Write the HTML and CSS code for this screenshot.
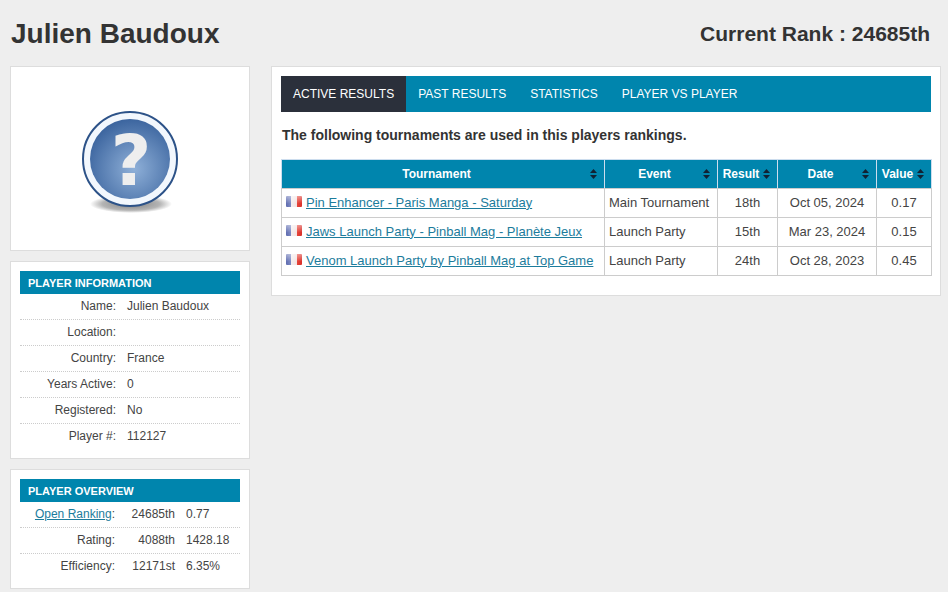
FILE: index.html
```html
<!DOCTYPE html>
<html lang="en">
<head>
    <meta charset="UTF-8">
    <title>Julien Baudoux</title>
    <link rel="stylesheet" href="styles.css">
</head>
<body>
    <div class="page-head">
        <h1>Julien Baudoux</h1>
        <h2>Current Rank : 24685th</h2>
    </div>
    <div class="layout">
        <div class="sidebar">
            <div class="card photo">
                <svg width="110" height="116" viewBox="0 0 110 116">
                    <defs>
                        <radialGradient id="ball" cx="0.55" cy="0.62" r="0.62">
                            <stop offset="0" stop-color="#8fb0d8"/>
                            <stop offset="1" stop-color="#3c659f"/>
                        </radialGradient>
                        <radialGradient id="shade">
                            <stop offset="0" stop-color="#808080"/>
                            <stop offset="0.7" stop-color="#b4b4b4"/>
                            <stop offset="1" stop-color="#fff"/>
                        </radialGradient>
                    </defs>
                    <ellipse cx="56" cy="95" rx="41" ry="9" fill="url(#shade)"/>
                    <circle cx="55" cy="50" r="47" fill="#f2f7fd" stroke="#2c5288" stroke-width="2"/>
                    <circle cx="55" cy="50" r="40" fill="url(#ball)"/>
                    <text class="mark" x="56" y="76" text-anchor="middle">?</text>
                </svg>
            </div>
            <div class="card">
                <div class="bar">Player Information</div>
                <div class="row"><span class="lbl">Name:</span><span>Julien Baudoux</span></div>
                <div class="row"><span class="lbl">Location:</span><span></span></div>
                <div class="row"><span class="lbl">Country:</span><span>France</span></div>
                <div class="row"><span class="lbl">Years Active:</span><span>0</span></div>
                <div class="row"><span class="lbl">Registered:</span><span>No</span></div>
                <div class="row"><span class="lbl">Player #:</span><span>112127</span></div>
            </div>
            <div class="card">
                <div class="bar">Player Overview</div>
                <div class="row row3"><span class="lbl"><a href="#">Open Ranking</a>:</span><span class="num">24685th</span><span>0.77</span></div>
                <div class="row row3"><span class="lbl">Rating:</span><span class="num">4088th</span><span>1428.18</span></div>
                <div class="row row3"><span class="lbl">Efficiency:</span><span class="num">12171st</span><span>6.35%</span></div>
            </div>
        </div>
        <div class="card main">
            <ul class="tabs">
                <li class="active"><a href="#">Active Results</a></li>
                <li><a href="#">Past Results</a></li>
                <li><a href="#">Statistics</a></li>
                <li><a href="#">Player vs Player</a></li>
            </ul>
            <p class="intro">The following tournaments are used in this players rankings.</p>
            <table>
                <thead>
                    <tr>
                        <th class="c1">Tournament</th>
                        <th class="c2">Event</th>
                        <th class="c3">Result</th>
                        <th class="c4">Date</th>
                        <th class="c5">Value</th>
                    </tr>
                </thead>
                <tbody>
                    <tr>
                        <td><span class="flag"></span><a href="#">Pin Enhancer - Paris Manga - Saturday</a></td>
                        <td>Main Tournament</td>
                        <td class="mid">18th</td>
                        <td class="mid">Oct 05, 2024</td>
                        <td class="mid">0.17</td>
                    </tr>
                    <tr>
                        <td><span class="flag"></span><a href="#">Jaws Launch Party - Pinball Mag - Planète Jeux</a></td>
                        <td>Launch Party</td>
                        <td class="mid">15th</td>
                        <td class="mid">Mar 23, 2024</td>
                        <td class="mid">0.15</td>
                    </tr>
                    <tr>
                        <td><span class="flag"></span><a href="#">Venom Launch Party by Pinball Mag at Top Game</a></td>
                        <td>Launch Party</td>
                        <td class="mid">24th</td>
                        <td class="mid">Oct 28, 2023</td>
                        <td class="mid">0.45</td>
                    </tr>
                </tbody>
            </table>
        </div>
    </div>
</body>
</html>
```

FILE: styles.css
```css
*{
    margin: 0;
    padding: 0;
    box-sizing: border-box;
    list-style: none;
}
body{
    background-color: #eee;
    color: #444;
    font-family: "Liberation Sans", Arial, sans-serif;
    font-size: 12px;
    padding: 0 7px 0 10px;
}
a{
    color: #1c7c9c;
}
.page-head{
    height: 66px;
    padding: 2px 11px 0 1px;
    display: flex;
    justify-content: space-between;
    align-items: center;
    color: #333;
}
h1{
    font-size: 28px;
}
h2{
    font-size: 21px;
}
.layout{
    display: flex;
    gap: 21px;
    align-items: flex-start;
}
.sidebar{
    width: 240px;
    display: flex;
    flex-direction: column;
    gap: 10px;
}
.card{
    background-color: #fff;
    border: 1px solid #ddd;
    padding: 9px 9px 8px;
}
.photo{
    height: 185px;
    display: flex;
    justify-content: center;
    align-items: center;
    padding: 16px 0 0;
}
.mark{
    font-family: "DejaVu Sans", sans-serif;
    font-weight: bold;
    font-size: 70px;
    fill: #eeeeee;
}
.bar{
    height: 23px;
    line-height: 24px;
    padding-left: 8px;
    background-color: #0085ad;
    color: #fff;
    font-size: 11px;
    font-weight: bold;
    text-transform: uppercase;
}
.row{
    display: grid;
    grid-template-columns: 96px 1fr;
    column-gap: 11px;
    height: 26px;
    line-height: 25px;
    border-bottom: 1px dotted #ccc;
}
.row:last-child{
    border-bottom: 0;
}
.lbl{
    text-align: right;
}
.row3{
    grid-template-columns: 95px 49px 1fr;
}
.num{
    text-align: right;
}
.main{
    width: 670px;
    height: 230px;
}
.tabs{
    display: flex;
    height: 36px;
    background-color: #0085ad;
}
.tabs a{
    display: block;
    padding: 0 12px;
    line-height: 36px;
    color: #fff;
    font-size: 12px;
    text-decoration: none;
    text-transform: uppercase;
}
.tabs .active{
    background-color: #2b303b;
}
.intro{
    margin: 15px 0 16px 1px;
    font-size: 14px;
    line-height: 16px;
    font-weight: bold;
    color: #333;
}
table{
    width: 650px;
    border-collapse: collapse;
    table-layout: fixed;
}
th{
    height: 29px;
    padding-right: 13px;
    background: #0085ad url("data:image/svg+xml,%3Csvg xmlns='http://www.w3.org/2000/svg' width='7' height='10'%3E%3Cpath d='M3.5 0L7 4H0zM3.5 10L0 6h7z' fill='%23123'/%3E%3C/svg%3E") no-repeat right 7px center;
    border: 1px solid #cde;
    border-bottom-color: #ccc;
    color: #fff;
    font-size: 12px;
}
td{
    height: 29px;
    padding: 0 4px 2px;
    border: 1px solid #ccc;
    font-size: 13px;
    white-space: nowrap;
}
.c1{ width: 323px; }
.c2{ width: 113px; }
.c3{ width: 60px; }
.c4{ width: 99px; }
.c5{ width: 55px; }
.mid{
    text-align: center;
}
.flag{
    display: inline-block;
    width: 16px;
    height: 11px;
    margin-right: 4px;
    vertical-align: 0;
    border-radius: 1px;
    background:
        linear-gradient(to bottom, rgba(255,255,255,.45), rgba(255,255,255,0) 70%),
        linear-gradient(to right, #5f6cb0 0, #7f8cc4 33%, #f6eeee 34%, #f2e4e4 66%, #e8463a 67%, #d8302a 100%);
}
```
